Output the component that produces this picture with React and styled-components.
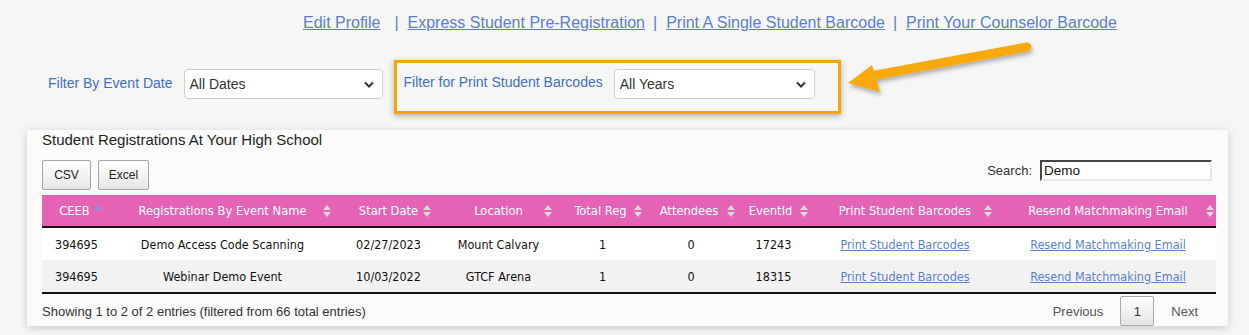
import React from "react"
import styled, { createGlobalStyle } from "styled-components"

const GlobalStyle = createGlobalStyle`
  body {
    margin: 0;
    background: #f6f6f6;
    font-family: "Liberation Sans", Arial, sans-serif;
  }
`

const Page = styled.div`
  position: relative;
  width: 1249px;
  height: 335px;
  overflow: hidden;
`

const Nav = styled.nav`
  display: flex;
  align-items: center;
  padding: 12px 0 0 303px;
  height: 22px;
  font-size: 16px;
`

const NavLink = styled.a`
  color: #5b7fc8;
  text-decoration: underline;
  cursor: pointer;
`

const Sep = styled.span`
  color: #5b7fc8;
  margin: ${p => p.wide ? "0 9px 0 14px" : "0 9px 0 8px"};
`

const FilterRow = styled.div`
  display: flex;
  align-items: flex-start;
  padding: 26px 0 0 48px;
`

const FilterLabel = styled.span`
  font-size: 14px;
  line-height: 16px;
  color: #3f70c4;
  margin: ${p => p.top}px ${p => p.gap}px 0 0;
`

const Select = styled.div`
  box-sizing: border-box;
  width: ${p => p.width}px;
  height: 30px;
  margin-top: ${p => p.top}px;
  background: #fff;
  border: 1px solid #cfcfcf;
  border-radius: 4px;
  display: flex;
  align-items: center;
  justify-content: space-between;
  padding: 0 8px 0 5px;
  font-size: 14px;
  color: #333;
`

const Highlight = styled.div`
  box-sizing: border-box;
  margin-left: 11px;
  width: 447px;
  height: 54px;
  border: 3px solid #f5a70a;
  box-shadow: 0 2px 6px rgba(0, 0, 0, 0.3);
  display: flex;
  align-items: flex-start;
  padding: 0 0 0 7px;
`

const Arrow = styled.svg`
  position: absolute;
  left: 840px;
  top: 35px;
  overflow: visible;
`

const Card = styled.section`
  margin: 16px 21px 0 27px;
  height: 196px;
  box-sizing: border-box;
  background: #fbfbfb;
  box-shadow: 0 2px 8px rgba(0, 0, 0, 0.18);
  padding: 1px 12px 0 15px;
`

const Title = styled.h2`
  margin: 0;
  font-size: 15px;
  font-weight: normal;
  color: #1f1f1f;
  line-height: 18px;
`

const Toolbar = styled.div`
  display: flex;
  align-items: center;
  justify-content: space-between;
  margin-top: 11px;
  height: 30px;
`

const Buttons = styled.div`
  display: flex;
  gap: 7px;
`

const Button = styled.button`
  box-sizing: border-box;
  height: 30px;
  width: ${p => p.width}px;
  font-family: "Liberation Sans", Arial, sans-serif;
  font-size: 12px;
  color: #222;
  border: 1px solid #a5a5a5;
  border-radius: 2px;
  background: linear-gradient(#ffffff, #e6e6e6);
  padding: 0;
`

const Search = styled.label`
  display: flex;
  align-items: center;
  font-size: 13px;
  color: #333;
  margin: 0 4px 10px 0;
`

const SearchInput = styled.div`
  box-sizing: border-box;
  margin-left: 8px;
  width: 172px;
  height: 21px;
  background: #fff;
  border: 2px inset #e8e8e8;
  border-top-color: #999;
  border-left-color: #999;
  font-size: 13.5px;
  padding: 0 2px;
  line-height: 17px;
  color: #111;
`

const Table = styled.table`
  margin-top: 5px;
  width: 1174px;
  table-layout: fixed;
  border-collapse: collapse;
  font-family: "DejaVu Sans Condensed", "DejaVu Sans", sans-serif;
  font-size: 12.5px;
`

const Th = styled.th`
  position: relative;
  height: 31px;
  padding: 0;
  background: #e563b5;
  color: #fff;
  font-size: 12.8px;
  font-weight: normal;
  text-align: center;
  border-bottom: 2px solid #111;
  white-space: nowrap;
`

const HeadText = styled.span`
  position: relative;
  left: ${p => p.shift || 0}px;
`

const SortIcon = styled.svg`
  position: absolute;
  right: ${p => p.right}px;
  top: 8px;
`

const Row = styled.tr`
  background: ${p => p.odd ? "#fff" : "#f2f2f2"};
  &:last-child td {
    border-bottom: 2px solid #111;
  }
`

const Td = styled.td`
  height: 32px;
  padding: 0;
  color: #111;
  text-align: ${p => p.left ? "left" : "center"};
  padding-left: ${p => p.left ? "13px" : "0"};
  white-space: nowrap;
`

const CellLink = styled.a`
  color: #5b7fc8;
  text-decoration: underline;
`

const Footer = styled.div`
  display: flex;
  align-items: center;
  justify-content: space-between;
  height: 34px;
  font-size: 13px;
  color: #333;
`

const Pager = styled.div`
  display: flex;
  align-items: center;
  margin-right: 18px;
  color: #555;
  font-size: 13px;
`

const PageBtn = styled.div`
  box-sizing: border-box;
  width: 34px;
  height: 30px;
  margin: 0 17px;
  border: 1px solid #aaa;
  border-radius: 2px;
  background: linear-gradient(#fff, #e3e3e3);
  display: flex;
  align-items: center;
  justify-content: center;
  color: #333;
`

const Chevron = () => (
  <svg width="10" height="7" viewBox="0 0 10 7">
    <path d="M1 1.5 L5 5.5 L9 1.5" fill="none" stroke="#333" strokeWidth="2" />
  </svg>
)

const Sort = ({ right, asc }) => (
  <SortIcon right={right} width="8" height="16" viewBox="0 0 8 16">
    {asc ? (
      <path d="M0 7 L4 2 L8 7 Z" fill="#8a93e6" />
    ) : (
      <>
        <path d="M0 7 L4 2 L8 7 Z" fill="#d9d9d9" />
        <path d="M0 9 L4 14 L8 9 Z" fill="#d9d9d9" />
      </>
    )}
  </SortIcon>
)

const columns = [
  { label: "CEEB", width: 63, right: 3, asc: true, shift: 1 },
  { label: "Registrations By Event Name", width: 235, right: 9 },
  { label: "Start Date", width: 97, right: 6 },
  { label: "Location", width: 123, right: 8 },
  { label: "Total Reg", width: 85, right: 3, shift: -2 },
  { label: "Attendees", width: 92, right: 2, shift: -2 },
  { label: "EventId", width: 73, right: 2, shift: -3 },
  { label: "Print Student Barcodes", width: 190, right: 8 },
  { label: "Resend Matchmaking Email", width: 216, right: 2 },
]

const rows = [
  ["394695", "Demo Access Code Scanning", "02/27/2023", "Mount Calvary", "1", "0", "17243"],
  ["394695", "Webinar Demo Event", "10/03/2022", "GTCF Arena", "1", "0", "18315"],
]

const App = () => (
  <Page>
    <GlobalStyle />
    <Nav>
      <NavLink>Edit Profile</NavLink>
      <Sep wide>|</Sep>
      <NavLink>Express Student Pre-Registration</NavLink>
      <Sep>|</Sep>
      <NavLink>Print A Single Student Barcode</NavLink>
      <Sep>|</Sep>
      <NavLink>Print Your Counselor Barcode</NavLink>
    </Nav>

    <FilterRow>
      <FilterLabel top={15} gap={11}>Filter By Event Date</FilterLabel>
      <Select top={9} width={199}>All Dates <Chevron /></Select>
      <Highlight>
        <FilterLabel top={11} gap={11}>Filter for Print Student Barcodes</FilterLabel>
        <Select top={6} width={201}>All Years <Chevron /></Select>
      </Highlight>
    </FilterRow>

    <Arrow width="200" height="70" viewBox="0 0 200 70">
      <defs>
        <filter id="sh" x="-20%" y="-40%" width="140%" height="180%">
          <feDropShadow dx="1" dy="3" stdDeviation="2" floodColor="#000" floodOpacity="0.3" />
        </filter>
      </defs>
      <g filter="url(#sh)" fill="#f7a90b">
        <path d="M36 40 L187 12" stroke="#f7a90b" strokeWidth="9" strokeLinecap="round" />
        <path d="M8 48 L32 30 L40 57 Z" />
      </g>
    </Arrow>

    <Card>
      <Title>Student Registrations At Your High School</Title>
      <Toolbar>
        <Buttons>
          <Button width={49}>CSV</Button>
          <Button width={51}>Excel</Button>
        </Buttons>
        <Search>
          Search:
          <SearchInput>Demo</SearchInput>
        </Search>
      </Toolbar>

      <Table>
        <colgroup>
          {columns.map(c => <col key={c.label} style={{ width: c.width }} />)}
        </colgroup>
        <thead>
          <tr>
            {columns.map(c => (
              <Th key={c.label}>
                <HeadText shift={c.shift}>{c.label}</HeadText>
                <Sort right={c.right} asc={c.asc} />
              </Th>
            ))}
          </tr>
        </thead>
        <tbody>
          {rows.map((r, i) => (
            <Row key={r[6]} odd={i % 2 === 0}>
              <Td left>{r[0]}</Td>
              {r.slice(1).map((v, j) => <Td key={j}>{v}</Td>)}
              <Td><CellLink>Print Student Barcodes</CellLink></Td>
              <Td><CellLink>Resend Matchmaking Email</CellLink></Td>
            </Row>
          ))}
        </tbody>
      </Table>

      <Footer>
        <span>Showing 1 to 2 of 2 entries (filtered from 66 total entries)</span>
        <Pager>
          Previous
          <PageBtn>1</PageBtn>
          Next
        </Pager>
      </Footer>
    </Card>
  </Page>
)

export default App
